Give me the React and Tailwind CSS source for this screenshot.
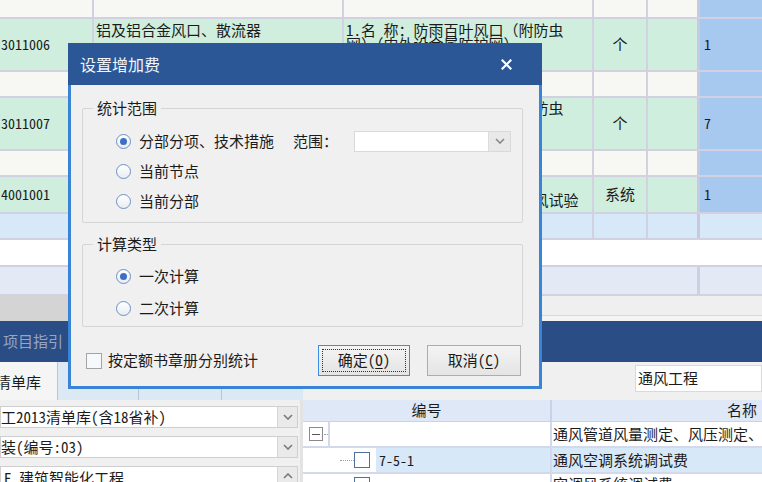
import React from "react";

const LINE = "border-[#d2d1e1]";

function Chevron({ up = false, color = "#7a7a7a" }) {
  return (
    <svg width="10" height="6" viewBox="0 0 10 6">
      <path
        d={up ? "M1 5 L5 1 L9 5" : "M1 1 L5 5 L9 1"}
        fill="none"
        stroke={color}
        strokeWidth="1.6"
      />
    </svg>
  );
}

function Radio({ checked }) {
  return (
    <span className="flex h-[15px] w-[15px] shrink-0 items-center justify-center rounded-full border border-[#6d90c4] bg-[linear-gradient(#ffffff,#e8edf4)]">
      {checked && <span className="h-[7px] w-[7px] rounded-full bg-[#3c6fc6]" />}
    </span>
  );
}

function TopRow({ h, bg, lines = "all", c6, cells = [] }) {
  const widths = ["w-[94px]", "w-[250px]", "w-[250px]", "w-[54px]", "w-[52px]", "w-[62px]"];
  return (
    <div className={`flex shrink-0 border-b-2 ${LINE} ${h} ${bg}`}>
      {widths.map((w, i) => {
        let border = "";
        if (lines === "all") border = i < 4 ? `border-r-2 ${LINE}` : i === 4 ? `border-r-[3px] border-[#c9c8dc]` : "";
        if (lines === "last" && i === 4) border = `border-r-[3px] border-[#cfcfe0]`;
        const bgc = i === 5 && c6 ? c6 : "";
        return (
          <div key={i} className={`relative shrink-0 overflow-hidden ${w} ${border} ${bgc}`}>
            {cells[i]}
          </div>
        );
      })}
    </div>
  );
}

function Code({ children }) {
  return (
    <div className="flex h-full items-center pl-[1px] text-[14px] whitespace-nowrap">{children}</div>
  );
}
function Center({ children }) {
  return <div className="flex h-full items-center justify-center whitespace-nowrap">{children}</div>;
}
function Qty({ children }) {
  return <div className="flex h-full items-center pl-[4px] text-[14px]">{children}</div>;
}
function Desc({ pt = "pt-[4px]" }) {
  return (
    <div className={`pl-[2px] ${pt} leading-[14px] whitespace-nowrap`}>
      <div>1.名 称：防雨百叶风口（附防虫</div>
      <div>网）（内外设金属防护网）</div>
    </div>
  );
}

function TopTable() {
  const BLUE = "bg-[#a8c9ef]";
  return (
    <div className="flex flex-col">
      <TopRow h="h-[19px]" bg="bg-[#f7f7f3]" c6={BLUE} />
      <TopRow
        h="h-[53px]"
        bg="bg-[#cfeedd]"
        c6={BLUE}
        cells={[
          <Code>3011006</Code>,
          <div className="pl-[2px] pt-[3px] leading-[16px] whitespace-nowrap">铝及铝合金风口、散流器</div>,
          <Desc />,
          <Center>个</Center>,
          null,
          <Qty>1</Qty>,
        ]}
      />
      <TopRow h="h-[26px]" bg="bg-[#f7f7f3]" c6={BLUE} />
      <TopRow
        h="h-[53px]"
        bg="bg-[#cfeedd]"
        c6={BLUE}
        cells={[
          <Code>3011007</Code>,
          <div className="pl-[2px] pt-[3px] leading-[16px] whitespace-nowrap">铝及铝合金风口、散流器</div>,
          <Desc pt="pt-[3px]" />,
          <Center>个</Center>,
          null,
          <Qty>7</Qty>,
        ]}
      />
      <TopRow h="h-[26px]" bg="bg-[#f7f7f3]" c6={BLUE} />
      <TopRow
        h="h-[37px]"
        bg="bg-[#cfeedd]"
        c6={BLUE}
        cells={[
          <Code>4001001</Code>,
          <div className="pl-[2px] pt-[2px] leading-[16px] whitespace-nowrap">通风工程检测、调试</div>,
          <div className="pl-[2px] pt-[15px] leading-[16px] whitespace-nowrap">1.名 称：通风系统调试及漏风试验</div>,
          <Center>系统</Center>,
          null,
          <Qty>1</Qty>,
        ]}
      />
      <TopRow h="h-[26px]" bg="bg-[#d7e8f8]" />
      <TopRow h="h-[27px]" bg="bg-white" lines="none" />
      <TopRow h="h-[29px]" bg="bg-[#e3eaf6]" lines="last" />
    </div>
  );
}

function ScrollStrip() {
  return (
    <div className="flex h-[25px] shrink-0">
      <div className="w-[300px] bg-[#d4d4d4]" />
      <div className="flex flex-1 flex-col">
        <div className="h-[20px] border-b border-[#d8d8d8] bg-[#efefef]" />
        <div className="flex-1 bg-[#f4f4f4]" />
      </div>
    </div>
  );
}

function DarkBar() {
  return (
    <div className="flex h-[41px] shrink-0 items-center bg-[#2a4d86] pl-[3px] text-[#97a6c0]">项目指引</div>
  );
}

function TabStrip() {
  return (
    <div className="flex h-[38px] shrink-0">
      <div className="flex w-[57px] shrink-0 items-center overflow-hidden bg-[#f5f5f5]">
        <span className="ml-[-4px] whitespace-nowrap pt-[2px]">清单库</span>
      </div>
      <div className="w-[81px] shrink-0 border-l border-[#b8c5dc] bg-[#dde8f5]" />
      <div className="w-[83px] shrink-0 border-l border-[#b8c5dc] bg-[#dde8f5]" />
      <div className="w-[82px] shrink-0 border-l border-[#b8c5dc] bg-[#dde8f5]" />
      <div className="flex-1 bg-[#f0f0f0] pl-[332px] pt-[3px]">
        <div className="flex h-[27px] items-center border border-[#d9d9d9] bg-white pl-[2px]">通风工程</div>
      </div>
    </div>
  );
}

function Select({ text }) {
  return (
    <div className="flex h-[22px] w-[298px] border border-[#cfcfcf] bg-white">
      <div className="flex flex-1 items-center overflow-hidden whitespace-nowrap">{text}</div>
      <div className="flex w-[20px] items-center justify-center border-l border-[#d6d6d6] bg-[#eaeaea]">
        <Chevron />
      </div>
    </div>
  );
}

function BottomPanels() {
  return (
    <div className="flex h-[82px] shrink-0">
      <div className="flex w-[300px] shrink-0 flex-col gap-[8px] bg-[#f0f0f0] pt-[6px]">
        <Select text="工2013清单库(含18省补)" />
        <Select text="装(编号:03)" />
        <div className="flex h-[20px] w-[298px] border border-[#cfcfcf] bg-white">
          <div className="flex-1 overflow-hidden whitespace-nowrap pl-[3px] leading-[22px]">E 建筑智能化工程</div>
          <div className="flex w-[20px] items-start justify-center border-l border-[#d6d6d6] bg-[#eaeaea] pt-[6px]">
            <Chevron up />
          </div>
        </div>
      </div>
      <div className="w-[3px] shrink-0 bg-[#e3e3e3]" />
      <div className="flex flex-1 flex-col overflow-hidden bg-white">
        <div className="flex h-[22px] shrink-0 border-b border-[#c9d2e6] bg-[#dfe8f6]">
          <div className="flex w-[249px] shrink-0 items-center justify-center border-r-2 border-[#c9d2e6]">编号</div>
          <div className="flex w-[380px] shrink-0 items-center justify-center">名称</div>
        </div>
        {/* row 1 */}
        <div className="flex h-[26px] shrink-0 border-b-2 border-[#d3d9ea]">
          <div className="relative flex w-[25px] shrink-0 items-center pl-[6px]">
            <span className="flex h-[14px] w-[14px] items-center justify-center border border-[#8a8a8a] bg-white">
              <span className="h-[1px] w-[8px] bg-[#555]" />
            </span>
            <span className="ml-[1px] w-[4px] border-t border-dotted border-[#a0a0a0]" />
          </div>
          <div className="w-[224px] shrink-0 border-r-2 border-l-2 border-[#d3d9ea] bg-white" />
          <div className="flex w-[380px] shrink-0 items-center whitespace-nowrap pl-[1px]">通风管道风量测定、风压测定、</div>
        </div>
        {/* row 2 */}
        <div className="flex h-[26px] shrink-0 border-b-2 border-[#d3d9ea]">
          <div className="flex w-[73px] shrink-0 items-center pl-[37px]">
            <span className="w-[14px] border-t border-dotted border-[#a0a0a0]" />
            <span className="h-[16px] w-[16px] shrink-0 border border-[#4f7199] bg-white" />
          </div>
          <div className="flex w-[176px] shrink-0 items-center border-r-2 border-[#d3d9ea] bg-[#d7e8f8] pl-[3px] text-[14px]">7-5-1</div>
          <div className="flex w-[380px] shrink-0 items-center whitespace-nowrap bg-[#d7e8f8] pl-[1px]">通风空调系统调试费</div>
        </div>
        {/* row 3 */}
        <div className="flex h-[26px] shrink-0">
          <div className="flex w-[73px] shrink-0 items-start pl-[51px] pt-[3px]">
            <span className="h-[16px] w-[16px] shrink-0 border border-[#4f7199] bg-white" />
          </div>
          <div className="w-[176px] shrink-0 border-r-2 border-[#d3d9ea]" />
          <div className="w-[380px] shrink-0 whitespace-nowrap pl-[1px] leading-[16px] pt-[2px]">空调风系统调试费</div>
        </div>
      </div>
    </div>
  );
}

function Dialog() {
  return (
    <div className="absolute left-[68px] top-[43px] flex h-[346px] w-[474px] flex-col">
      <div className="flex h-[42px] shrink-0 items-center justify-between bg-[#2b5797] pl-[12px] pr-[30px]">
        <span className="text-[16px] text-[#f2f5fa]">设置增加费</span>
        <svg width="11" height="11" viewBox="0 0 11 11">
          <path d="M1.5 1.5 L9.5 9.5 M9.5 1.5 L1.5 9.5" stroke="#ffffff" strokeWidth="2.2" strokeLinecap="square" />
        </svg>
      </div>
      <div className="flex flex-1 flex-col border-x-[3px] border-b-[3px] border-[#3a84d8] bg-[#f0f0f0]">
        {/* group 1 */}
        <div className="relative ml-[11px] mt-[23px] h-[115px] w-[441px] rounded-[2px] border border-[#d5d5d5] pt-[17px]">
          <span className="absolute left-[10px] top-[-10px] bg-[#f0f0f0] px-[4px] leading-[18px]">统计范围</span>
          <div className="flex h-[30px] items-center pl-[33px]">
            <Radio checked />
            <span className="ml-[8px] whitespace-nowrap">分部分项、技术措施</span>
            <span className="ml-[19px] whitespace-nowrap">范围：</span>
            <div className="ml-[16px] flex h-[21px] w-[157px] border border-[#d9d9d9] bg-white">
              <div className="flex-1" />
              <div className="flex w-[22px] items-center justify-center border-l border-[#dcdcdc] bg-[#e9e9e9]">
                <Chevron color="#888" />
              </div>
            </div>
          </div>
          <div className="flex h-[30px] items-center pl-[33px]">
            <Radio />
            <span className="ml-[8px]">当前节点</span>
          </div>
          <div className="flex h-[31px] items-center pl-[33px]">
            <Radio />
            <span className="ml-[8px]">当前分部</span>
          </div>
        </div>
        {/* group 2 */}
        <div className="relative ml-[11px] mt-[21px] h-[83px] w-[441px] rounded-[2px] border border-[#d5d5d5] pt-[15px]">
          <span className="absolute left-[10px] top-[-10px] bg-[#f0f0f0] px-[4px] leading-[18px]">计算类型</span>
          <div className="flex h-[32px] items-center pl-[33px]">
            <Radio checked />
            <span className="ml-[8px]">一次计算</span>
          </div>
          <div className="flex h-[33px] items-center pl-[33px]">
            <Radio />
            <span className="ml-[8px]">二次计算</span>
          </div>
        </div>
        {/* bottom row */}
        <div className="mt-[18px] flex h-[31px] items-center pl-[15px] pr-[18px]">
          <span className="h-[16px] w-[16px] shrink-0 border border-[#a3a3a3] bg-[#f6f9fc]" />
          <span className="ml-[6px] whitespace-nowrap">按定额书章册分别统计</span>
          <div className="flex-1" />
          <button className="flex h-[31px] w-[92px] items-center justify-center border border-[#3c8de3] bg-[linear-gradient(#f4f4f4,#e4e4e4)] p-[3px]">
            <span className="flex h-full w-full items-center justify-center border border-dotted border-[#333]">
              确定(<span className="underline underline-offset-2">O</span>)
            </span>
          </button>
          <button className="ml-[17px] flex h-[31px] w-[94px] items-center justify-center border border-[#adadad] bg-[linear-gradient(#f4f4f4,#e4e4e4)]">
            取消(<span className="underline underline-offset-2">C</span>)
          </button>
        </div>
      </div>
    </div>
  );
}

export default function App() {
  return (
    <div className="relative flex h-[482px] w-[762px] flex-col overflow-hidden bg-[#f0f0f0] font-['Noto_Sans_Mono_CJK_SC','Noto_Sans_CJK_SC',sans-serif] text-[15px] text-[#1b1b1b]">
      <TopTable />
      <ScrollStrip />
      <DarkBar />
      <TabStrip />
      <BottomPanels />
      <Dialog />
    </div>
  );
}
